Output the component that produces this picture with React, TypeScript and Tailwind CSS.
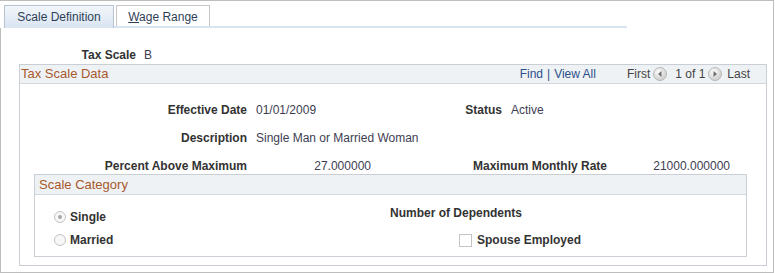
import React from "react"

function NavArrow({ dir }: { dir: "left" | "right" }) {
  return (
    <svg width="14" height="14" viewBox="0 0 14 14" className="shrink-0">
      <defs>
        <radialGradient id={`g-${dir}`} cx="40%" cy="35%" r="70%">
          <stop offset="0%" stopColor="#fdfdfd" />
          <stop offset="100%" stopColor="#c9c9c9" />
        </radialGradient>
      </defs>
      <circle cx="7" cy="7" r="6.5" fill={`url(#g-${dir})`} stroke="#b9b9b9" strokeWidth="1" />
      {dir === "left" ? (
        <polygon points="8.5,4 5,7 8.5,10" fill="#707070" />
      ) : (
        <polygon points="5.5,4 9,7 5.5,10" fill="#707070" />
      )}
    </svg>
  )
}

function Radio({ checked }: { checked?: boolean }) {
  return (
    <span className="w-[12px] h-[12px] rounded-full border border-[#c4c4c4] bg-[#f7f7f7] flex items-center justify-center shrink-0">
      {checked && <span className="w-[4px] h-[4px] rounded-full bg-[#a8a8a8]" />}
    </span>
  )
}

export default function App() {
  const val = "text-[#3d3d52] font-normal"

  return (
    <div className="w-[774px] h-[273px] bg-white border-t border-r border-b border-[#bdbdbd] flex flex-col font-['Liberation_Sans',Arial,sans-serif] text-[12px] text-[#333] font-bold">
      {/* Tabs */}
      <div className="ml-[4px] mt-[4px] w-[623px] font-normal">
        <div className="flex gap-[2px] h-[21px]">
          <div className="w-[110px] h-[23px] border-t border-l border-r border-[#b8c3d1] bg-gradient-to-b from-[#f2f6fa] to-[#d9e4f2] flex items-center justify-center pb-[1px] text-[#2f3f57]">
            Scale Definition
          </div>
          <div className="w-[94px] h-[21px] border-t border-l border-r border-[#c6c6c6] bg-white flex items-center justify-center pt-[1px] text-[#2f3f57]">
            <span>
              <span className="underline">W</span>age Range
            </span>
          </div>
        </div>
        <div className="h-[2px] bg-[#d9e4f2]" />
      </div>

      {/* Page content */}
      <div className="flex-1 border-l border-[#bdbdbd] flex flex-col">
        <div className="mt-[19px] h-[16px] leading-[16px] flex">
          <div className="w-[135px] text-right">Tax Scale</div>
          <div className={`ml-[8px] ${val}`}>B</div>
        </div>

        {/* Tax Scale Data */}
        <div className="mt-[1px] ml-[18px] w-[748px] border border-[#c9cfd4] pb-[8px]">
          <div className="h-[19px] bg-[#eff2f4] border-b border-[#d3d8dc] flex items-center pl-[1px] font-normal">
            <div className="text-[13px] text-[#a8592c]">Tax Scale Data</div>
            <div className="ml-auto flex items-center pr-[16px] text-[12px]">
              <span className="text-[#2d4e8c]">Find</span>
              <span className="text-[#2d4e8c] mx-[4px]">|</span>
              <span className="text-[#2d4e8c]">View All</span>
              <span className="ml-[31px] text-[#444]">First</span>
              <span className="ml-[3px]">
                <NavArrow dir="left" />
              </span>
              <span className="ml-[8px] text-[#444]">1 of 1</span>
              <span className="ml-[3px]">
                <NavArrow dir="right" />
              </span>
              <span className="ml-[5px] text-[#444]">Last</span>
            </div>
          </div>

          <div className="pt-[18px] flex flex-col gap-[12px]">
            <div className="h-[16px] leading-[16px] flex">
              <div className="w-[227px] text-right">Effective Date</div>
              <div className={`ml-[9px] w-[201px] ${val}`}>01/01/2009</div>
              <div className="w-[45px] text-right">Status</div>
              <div className={`ml-[9px] ${val}`}>Active</div>
            </div>
            <div className="h-[16px] leading-[16px] flex">
              <div className="w-[227px] text-right">Description</div>
              <div className={`ml-[9px] ${val}`}>Single Man or Married Woman</div>
            </div>
            <div className="h-[16px] leading-[16px] flex">
              <div className="w-[227px] text-right">Percent Above Maximum</div>
              <div className={`ml-[9px] w-[115px] text-right ${val}`}>27.000000</div>
              <div className="w-[236px] text-right">Maximum Monthly Rate</div>
              <div className={`w-[123px] text-right ${val}`}>21000.000000</div>
            </div>
          </div>

          {/* Scale Category */}
          <div className="ml-[14px] w-[713px] border border-[#c9cfd4] pb-[8px]">
            <div className="h-[20px] bg-[#eff2f4] border-b border-[#d3d8dc] flex items-center pl-[4px] font-normal text-[13px] text-[#a8592c]">
              Scale Category
            </div>
            <div className="pt-[10px] flex flex-col gap-[7px]">
              <div className="h-[20px] flex">
                <div className="w-[355px] pl-[19px] flex items-end">
                  <div className="h-[16px] flex items-center gap-[4px]">
                    <Radio checked />
                    <span>Single</span>
                  </div>
                </div>
                <div className="h-[16px] leading-[16px]">Number of Dependents</div>
              </div>
              <div className="h-[16px] flex">
                <div className="w-[355px] pl-[19px] flex items-center gap-[4px]">
                  <Radio />
                  <span>Married</span>
                </div>
                <div className="ml-[69px] flex items-center gap-[5px]">
                  <span className="w-[13px] h-[13px] border border-[#c4c4c4] bg-white shrink-0" />
                  <span>Spouse Employed</span>
                </div>
              </div>
            </div>
          </div>
        </div>
      </div>
    </div>
  )
}
